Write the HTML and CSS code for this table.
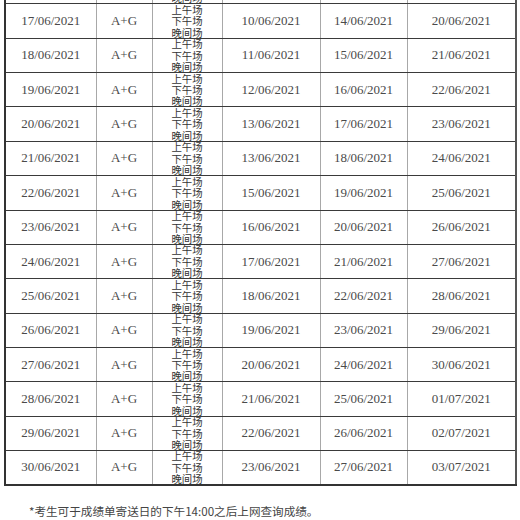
FILE: index.html
```html
<!DOCTYPE html>
<html lang="zh-CN">
<head>
<meta charset="utf-8">
<link rel="stylesheet" href="styles.css">
</head>
<body>
<div class="page">
<table class="sched">
<colgroup>
<col class="c1"><col class="c2"><col class="c3"><col class="c4"><col class="c5"><col class="c6">
</colgroup>
<tbody>
<tr><td>16/06/2021</td><td>A+G</td><td class="s"><div class="stack"><span>上午场</span><span>下午场</span><span>晚间场</span></div></td><td>09/06/2021</td><td>13/06/2021</td><td>19/06/2021</td></tr>
<tr><td>17/06/2021</td><td>A+G</td><td class="s"><div class="stack"><span>上午场</span><span>下午场</span><span>晚间场</span></div></td><td>10/06/2021</td><td>14/06/2021</td><td>20/06/2021</td></tr>
<tr><td>18/06/2021</td><td>A+G</td><td class="s"><div class="stack"><span>上午场</span><span>下午场</span><span>晚间场</span></div></td><td>11/06/2021</td><td>15/06/2021</td><td>21/06/2021</td></tr>
<tr><td>19/06/2021</td><td>A+G</td><td class="s"><div class="stack"><span>上午场</span><span>下午场</span><span>晚间场</span></div></td><td>12/06/2021</td><td>16/06/2021</td><td>22/06/2021</td></tr>
<tr><td>20/06/2021</td><td>A+G</td><td class="s"><div class="stack"><span>上午场</span><span>下午场</span><span>晚间场</span></div></td><td>13/06/2021</td><td>17/06/2021</td><td>23/06/2021</td></tr>
<tr><td>21/06/2021</td><td>A+G</td><td class="s"><div class="stack"><span>上午场</span><span>下午场</span><span>晚间场</span></div></td><td>13/06/2021</td><td>18/06/2021</td><td>24/06/2021</td></tr>
<tr><td>22/06/2021</td><td>A+G</td><td class="s"><div class="stack"><span>上午场</span><span>下午场</span><span>晚间场</span></div></td><td>15/06/2021</td><td>19/06/2021</td><td>25/06/2021</td></tr>
<tr><td>23/06/2021</td><td>A+G</td><td class="s"><div class="stack"><span>上午场</span><span>下午场</span><span>晚间场</span></div></td><td>16/06/2021</td><td>20/06/2021</td><td>26/06/2021</td></tr>
<tr><td>24/06/2021</td><td>A+G</td><td class="s"><div class="stack"><span>上午场</span><span>下午场</span><span>晚间场</span></div></td><td>17/06/2021</td><td>21/06/2021</td><td>27/06/2021</td></tr>
<tr><td>25/06/2021</td><td>A+G</td><td class="s"><div class="stack"><span>上午场</span><span>下午场</span><span>晚间场</span></div></td><td>18/06/2021</td><td>22/06/2021</td><td>28/06/2021</td></tr>
<tr><td>26/06/2021</td><td>A+G</td><td class="s"><div class="stack"><span>上午场</span><span>下午场</span><span>晚间场</span></div></td><td>19/06/2021</td><td>23/06/2021</td><td>29/06/2021</td></tr>
<tr><td>27/06/2021</td><td>A+G</td><td class="s"><div class="stack"><span>上午场</span><span>下午场</span><span>晚间场</span></div></td><td>20/06/2021</td><td>24/06/2021</td><td>30/06/2021</td></tr>
<tr><td>28/06/2021</td><td>A+G</td><td class="s"><div class="stack"><span>上午场</span><span>下午场</span><span>晚间场</span></div></td><td>21/06/2021</td><td>25/06/2021</td><td>01/07/2021</td></tr>
<tr><td>29/06/2021</td><td>A+G</td><td class="s"><div class="stack"><span>上午场</span><span>下午场</span><span>晚间场</span></div></td><td>22/06/2021</td><td>26/06/2021</td><td>02/07/2021</td></tr>
<tr><td>30/06/2021</td><td>A+G</td><td class="s"><div class="stack"><span>上午场</span><span>下午场</span><span>晚间场</span></div></td><td>23/06/2021</td><td>27/06/2021</td><td>03/07/2021</td></tr>
</tbody>
</table>
<p class="note">*考生可于成绩单寄送日的下午14:00之后上网查询成绩。</p>
</div>
</body>
</html>
```
FILE: styles.css
```css
html, body {
  margin: 0;
  padding: 0;
  background: #ffffff;
}
.page {
  padding-left: 4px;
  overflow: hidden;
  height: 520px;
}
.sched {
  margin-top: -31px;
  width: 511px;
  border-collapse: collapse;
  table-layout: fixed;
  font-family: "Liberation Serif", "Noto Sans CJK SC", serif;
  font-size: 13px;
  color: #4a4a4a;
  border-left: 2px solid #333;
  border-right: 2px solid #555;
  border-bottom: 2px solid #333;
}
.c1 { width: 91px; }
.c2 { width: 56px; }
.c3 { width: 70px; }
.c4 { width: 98px; }
.c5 { width: 87px; }
.c6 { width: 109px; }
.sched tr {
  height: 34.36px;
}
.sched td {
  padding: 0;
  line-height: 14px;
  text-align: center;
  vertical-align: middle;
  border-top: 1px solid #3a3a3a;
  border-bottom: 1px solid #3a3a3a;
  border-left: 1px solid #a8a8a8;
  border-right: 1px solid #a8a8a8;
}
.sched td.s {
  font-family: "Noto Sans CJK SC", sans-serif;
  font-size: 10.4px;
  color: #333;
}
.stack {
  height: 30px;
  display: flex;
  flex-direction: column;
  justify-content: center;
  align-items: center;
}
.stack span {
  flex: none;
  display: block;
  height: 11.4px;
  line-height: 11.4px;
}
.note {
  margin: 17px 0 0 25px;
  font-family: "Noto Sans CJK SC", sans-serif;
  font-size: 11.6px;
  line-height: 16px;
  color: #444;
}
```
